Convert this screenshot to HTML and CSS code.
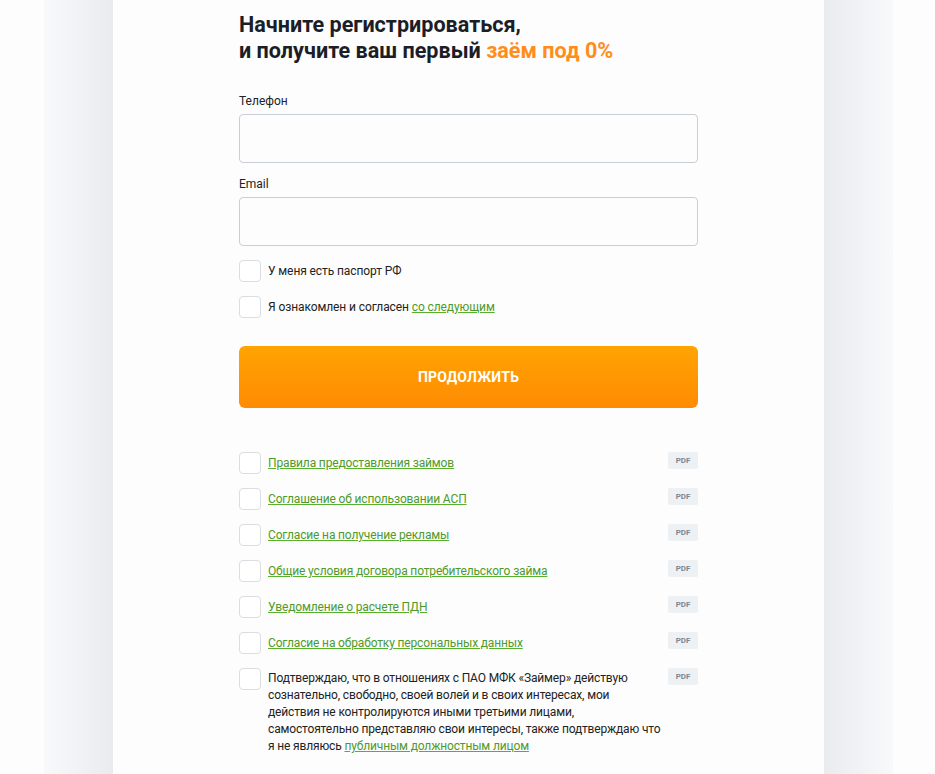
FILE: index.html
```html
<!DOCTYPE html>
<html lang="ru">
<head>
    <meta charset="UTF-8">
    <meta name="viewport" content="width=device-width, initial-scale=1.0">
    <title>Регистрация</title>
    <link rel="stylesheet" href="styles.css">
</head>
<body>

<div class="page">
    <div class="side side-left"></div>

    <div class="card">
        <form class="form">
            <h1 class="title">Начните регистрироваться,<br>и получите ваш первый <span class="accent">заём под 0%</span></h1>

            <div class="field">
                <label for="phone">Телефон</label>
                <input id="phone" type="text">
            </div>

            <div class="field">
                <label for="email">Email</label>
                <input id="email" type="text">
            </div>

            <div class="check">
                <span class="box"></span>
                <span class="check-text">У меня есть паспорт РФ</span>
            </div>
            <div class="check">
                <span class="box"></span>
                <span class="check-text">Я ознакомлен и согласен <a href="#">со следующим</a></span>
            </div>

            <button type="button" class="btn">ПРОДОЛЖИТЬ</button>

            <div class="docs">
                <div class="doc">
                    <span class="box"></span>
                    <span class="doc-text"><a href="#">Правила предоставления займов</a></span>
                    <span class="pdf">PDF</span>
                </div>
                <div class="doc">
                    <span class="box"></span>
                    <span class="doc-text"><a href="#">Соглашение об использовании АСП</a></span>
                    <span class="pdf">PDF</span>
                </div>
                <div class="doc">
                    <span class="box"></span>
                    <span class="doc-text"><a href="#">Согласие на получение рекламы</a></span>
                    <span class="pdf">PDF</span>
                </div>
                <div class="doc">
                    <span class="box"></span>
                    <span class="doc-text"><a href="#">Общие условия договора потребительского займа</a></span>
                    <span class="pdf">PDF</span>
                </div>
                <div class="doc">
                    <span class="box"></span>
                    <span class="doc-text"><a href="#">Уведомление о расчете ПДН</a></span>
                    <span class="pdf">PDF</span>
                </div>
                <div class="doc">
                    <span class="box"></span>
                    <span class="doc-text"><a href="#">Согласие на обработку персональных данных</a></span>
                    <span class="pdf">PDF</span>
                </div>
                <div class="doc">
                    <span class="box"></span>
                    <span class="doc-text long">Подтверждаю, что в отношениях с ПАО МФК «Займер» действую сознательно, свободно, своей волей и в своих интересах, мои действия не контролируются иными третьими лицами, самостоятельно представляю свои интересы, также подтверждаю что я не являюсь <a href="#">публичным должностным лицом</a></span>
                    <span class="pdf">PDF</span>
                </div>
            </div>
        </form>
    </div>

    <div class="side side-right"></div>
</div>

</body>
</html>
```

FILE: styles.css
```css
body {
    font-family: Roboto, "Liberation Sans", sans-serif;
    margin: 0;
    padding: 0;
    background: #fdfdfd;
    color: #1c1f26;
}

.page {
    display: flex;
    padding-left: 44px;
    height: 774px;
    overflow: hidden;
}

.side {
    width: 69px;
}

.side-left {
    background: linear-gradient(to right, #f8f9fb, #e9ebee);
}

.side-right {
    background: linear-gradient(to left, #f8f9fb, #e9ebee);
}

.card {
    width: 711px;
    background: #fdfdfd;
    display: flex;
    justify-content: center;
}

.form {
    width: 459px;
    padding-top: 12px;
}

.title {
    margin: 0 0 30px;
    font-size: 21.6px;
    line-height: 26px;
    font-weight: 700;
    color: #1b1e27;
}

.accent {
    color: #ff8d1c;
}

.field {
    margin-bottom: 14px;
}

.field label {
    display: block;
    font-size: 12px;
    line-height: 14px;
    margin-bottom: 6px;
    color: #222;
}

.field input {
    box-sizing: border-box;
    width: 100%;
    height: 49px;
    border: 1px solid #c9ced4;
    border-radius: 4px;
    background: #fdfdfd;
    font-family: inherit;
}

.check {
    display: flex;
    align-items: center;
    margin-bottom: 14px;
}

.box {
    box-sizing: border-box;
    flex: none;
    width: 22px;
    height: 22px;
    border: 1px solid #dadde1;
    border-radius: 4px;
    background: #fff;
    margin-right: 7px;
}

.check-text {
    font-size: 12px;
    letter-spacing: -0.1px;
    color: #222;
}

a {
    color: #4e9a2a;
    text-decoration: underline;
    text-decoration-color: #58b02c;
}

.btn {
    display: block;
    width: 100%;
    height: 62px;
    margin-top: 28px;
    border: none;
    border-radius: 6px;
    background: linear-gradient(to bottom, #ffa402, #ff8b02);
    color: #fff;
    font-family: inherit;
    font-size: 14px;
    font-weight: 700;
    letter-spacing: 0.2px;
}

.docs {
    margin-top: 44px;
}

.doc {
    display: flex;
    align-items: flex-start;
    margin-bottom: 14px;
}

.doc-text {
    flex: 1;
    font-size: 12px;
    line-height: 22px;
    letter-spacing: -0.15px;
    color: #222;
}

.doc-text.long {
    line-height: 17px;
    padding-top: 2px;
    padding-right: 6px;
}

.pdf {
    flex: none;
    width: 30px;
    height: 17px;
    line-height: 17px;
    text-align: center;
    background: #eef1f4;
    border-radius: 2px;
    font-size: 8px;
    font-weight: 700;
    color: #7d8794;
}
```
